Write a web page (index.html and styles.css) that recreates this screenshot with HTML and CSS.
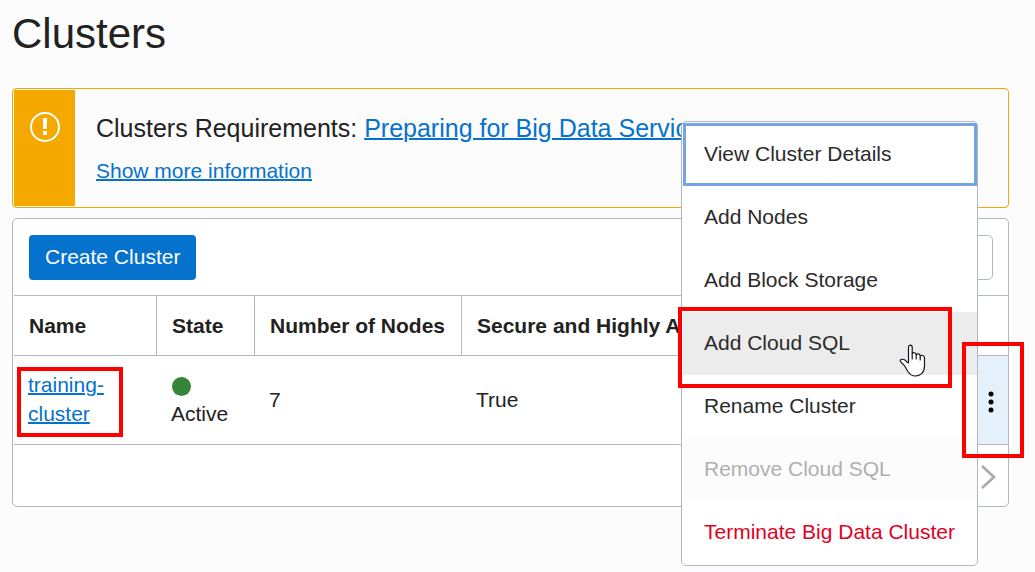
FILE: index.html
```
<!DOCTYPE html>
<html lang="en">
<head>
<meta charset="utf-8">
<title>Clusters</title>
<link rel="stylesheet" href="styles.css">
</head>
<body>
<main class="page">
  <h1 class="title">Clusters</h1>

  <section class="alert">
    <div class="alert-icon">
      <svg width="32" height="32" viewBox="0 0 32 32" fill="none" aria-hidden="true">
        <circle cx="16" cy="16" r="14" stroke="#fff" stroke-width="2"/>
        <path d="M13.800 7h4.400l-.5 11h-3.400z" fill="#fff"/>
        <path d="M14 20h4v4h-4z" fill="#fff"/>
      </svg>
    </div>
    <div class="alert-body">
      <p class="alert-heading">Clusters Requirements: <a href="#">Preparing for Big Data Service</a></p>
      <a class="alert-more" href="#">Show more information</a>
    </div>
  </section>

  <section class="panel">
    <div class="toolbar">
      <button class="create" type="button">Create Cluster</button>
      <input class="search" type="text" aria-label="Search clusters">
    </div>
    <table class="clusters">
      <colgroup><col class="col-name"><col class="col-state"><col class="col-nodes"><col><col class="col-actions"></colgroup>
      <thead>
        <tr><th>Name</th><th>State</th><th>Number of Nodes</th><th class="last">Secure and Highly Available</th><th class="last" aria-label="Actions"></th></tr>
      </thead>
      <tbody>
        <tr>
          <td class="marked"><a href="#">training-<br>cluster</a><span class="marker marker-name"></span></td>
          <td><span class="dot"></span><br>Active</td>
          <td>7</td>
          <td>True</td>
          <td class="marked actions">
            <button class="kebab" type="button" aria-label="Cluster actions">
              <svg width="6" height="22" viewBox="0 0 6 22" aria-hidden="true"><circle cx="3" cy="3" r="2.5"/><circle cx="3" cy="11" r="2.5"/><circle cx="3" cy="19" r="2.5"/></svg>
            </button>
            <span class="marker marker-actions"></span>
          </td>
        </tr>
      </tbody>
    </table>
    <div class="footer">
      <button class="next" type="button" aria-label="Next page" disabled>
        <svg width="16" height="26" viewBox="0 0 16 26" fill="none" aria-hidden="true"><path d="M2 2l12 11L2 24" stroke="#aaa" stroke-width="2.6"/></svg>
      </button>
    </div>

    <div class="menu" role="menu">
      <button class="item focused" type="button" role="menuitem">View Cluster Details</button>
      <button class="item" type="button" role="menuitem">Add Nodes</button>
      <button class="item" type="button" role="menuitem">Add Block Storage</button>
      <button class="item hovered" type="button" role="menuitem">Add Cloud SQL
        <span class="marker marker-item"></span>
        <svg class="cursor" width="28" height="34" viewBox="0 0 28 34" fill="#fff" stroke="#15151f" stroke-width="1.2" stroke-linejoin="round" stroke-linecap="round" aria-hidden="true">
          <path d="M9.500 19V3.200C9.500.4 13.200.4 13.200 3.200V9.500C14 8.200 17 8.500 17.200 10.500C18.500 9.200 21 9.700 21.200 12C22.500 10.500 25.500 11.500 25.500 14V22C25.500 28.500 21.500 32 16.500 32C12.500 32 10.500 30 8.800 27.500L6 22.500C4.500 20 1.600 18.500 1.200 16.800C1.200 15.200 3.800 14.800 5.500 15.800C7 16.700 7.500 18.500 9.500 19Z"/>
          <path d="M13.200 9.500V15M17.200 10.500V15M21.200 12V16" fill="none"/>
        </svg>
      </button>
      <button class="item" type="button" role="menuitem">Rename Cluster</button>
      <button class="item" type="button" role="menuitem" disabled>Remove Cloud SQL</button>
      <button class="item danger" type="button" role="menuitem">Terminate Big Data Cluster</button>
    </div>
  </section>
</main>
</body>
</html>
```
FILE: styles.css
```
* { box-sizing: border-box; }
body {
  margin: 0;
  background: #fcfcfc;
  color: #222;
  font: 21px/29px "Liberation Sans", Arial, sans-serif;
}
button, input { font: inherit; color: inherit; }
a { color: #0572ce; text-decoration-thickness: 2px; }
.page { padding: 10px 26px 65px 12px; }
.title { margin: 0 0 30px; font-size: 42px; font-weight: 400; line-height: 48px; }

.alert {
  display: flex;
  margin-bottom: 10px;
  padding: 1px;
  border: 1px solid #f5a800;
  border-radius: 4px;
}
.alert-icon {
  flex: none;
  width: 61px;
  padding-top: 21px;
  background: #f5a800;
  text-align: center;
  line-height: 0;
}
.alert-body { min-width: 0; padding: 23px 21px 21px; }
.alert-heading { margin: 0 0 13px; font-size: 25px; line-height: 30px; white-space: nowrap; }
.alert-more { display: block; }

.panel {
  position: relative;
  background: #fff;
  border: 1px solid #b1b7c2;
  border-radius: 5px;
}
.toolbar { display: flex; justify-content: space-between; padding: 16px 15px 15px 16px; }
.create {
  height: 45px;
  padding: 0 16px 2px;
  border: 0;
  border-radius: 4px;
  background: #0572ce;
  color: #fff;
}
.search { width: 300px; height: 45px; border: 1px solid #b1b7c2; border-radius: 5px; background: #fff; }

.clusters { width: 100%; padding: 0 0 0 1px; border-spacing: 0; table-layout: fixed; }
.col-name { width: 143px; }
.col-state { width: 98px; }
.col-nodes { width: 207px; }
.col-actions { width: 35px; }
th, td { padding: 15px 0 15px 15px; text-align: left; border-bottom: 1px solid #b1b7c2; }
th { border-top: 1px solid #b1b7c2; border-right: 1px solid #b1b7c2; white-space: nowrap; }
.last { border-right: 0; }
td { padding: 14px 0 16px 14px; }
.dot {
  display: inline-block;
  width: 19px;
  height: 19px;
  margin-left: 1px;
  border-radius: 50%;
  background: #358539;
  vertical-align: middle;
}
.marked { position: relative; }
td.actions { padding: 0; background: #e4f0fa; text-align: center; }
.kebab { display: inline-flex; padding: 0; border: 0; background: none; color: #000; vertical-align: middle; }

.footer { display: flex; justify-content: flex-end; padding: 19px 12px 16px; }
.next { display: flex; padding: 0; border: 0; background: none; }

.menu {
  position: absolute;
  top: -98px;
  right: 30px;
  z-index: 1;
  width: 297px;
  padding: 1px 0 1px 1px;
  border: 1px solid #b1b7c2;
  border-radius: 5px;
  background: #fff;
  color: #2b2b2b;
}
.item {
  position: relative;
  display: block;
  width: 100%;
  height: 63px;
  padding: 0 17px 2px 21px;
  border: 0;
  background: none;
  text-align: left;
  white-space: nowrap;
}
.item.focused { outline: 3px solid #75a5e0; outline-offset: -3px; }
.item.hovered { background: #ececec; }
.item:disabled { background: #fcfcfc; color: #afafaf; }
.item.danger { color: #e2001f; }

.marker { position: absolute; z-index: 2; border: 4px solid #f00; pointer-events: none; }
.marker-name { inset: 11px 34px 7px 3px; }
.marker-actions { inset: -14px -16px -14px -11px; }
.marker-item { inset: -5px 25px -13px -5px; }
.cursor { position: absolute; z-index: 3; top: 32px; right: 50px; }
```
